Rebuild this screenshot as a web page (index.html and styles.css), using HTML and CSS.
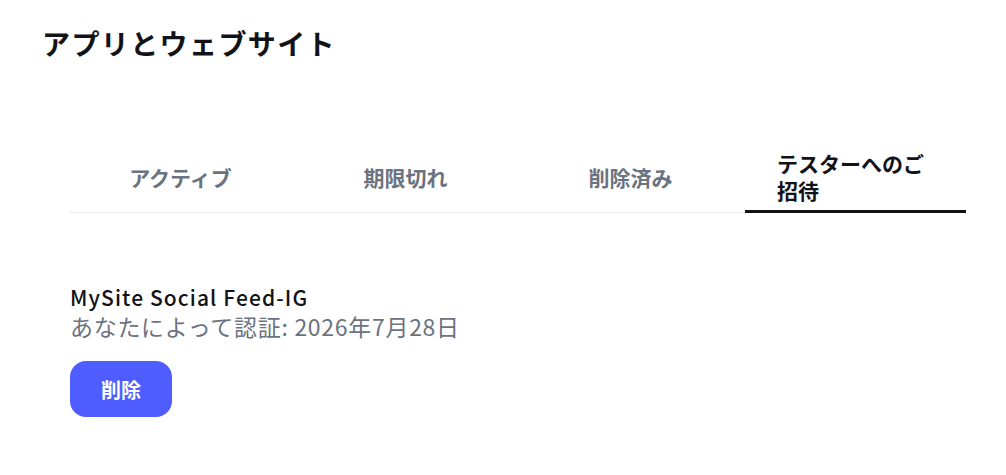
FILE: index.html
```html
<!DOCTYPE html>
<html lang="ja">
<head>
<meta charset="utf-8">
<title>アプリとウェブサイト</title>
<link rel="stylesheet" href="styles.css">
</head>
<body>
<main class="page">
  <h1 class="title">アプリとウェブサイト</h1>
  <div class="tabs">
    <div class="tab"><span>アクティブ</span></div>
    <div class="tab"><span>期限切れ</span></div>
    <div class="tab"><span>削除済み</span></div>
    <div class="tab active"><span>テスターへのご招待</span></div>
  </div>
  <section class="app">
    <div class="app-name">MySite Social Feed-IG</div>
    <div class="app-meta">あなたによって認証: 2026年7月28日</div>
    <button class="btn-delete" type="button">削除</button>
  </section>
</main>
</body>
</html>
```
FILE: styles.css
```css
* { box-sizing: border-box; }
html, body { margin: 0; padding: 0; background: #fff; }
body {
  font-family: "Noto Sans CJK JP", "Noto Sans", sans-serif;
  color: #111318;
}
.page {
  padding: 25px 0 0 0;
}
.title {
  margin: 0 0 0 42px;
  font-size: 28px;
  line-height: 36px;
  font-weight: 700;
  letter-spacing: 1.4px;
  color: #111318;
}
.tabs {
  margin: 73px 0 0 70px;
  width: 896px;
  display: flex;
  gap: 4px;
  border-bottom: 1px solid #e5e7eb;
}
.tab {
  flex: 1 1 0;
  display: flex;
  align-items: center;
  justify-content: center;
  padding: 16px 32px 8px;
  font-size: 21px;
  line-height: 27px;
  font-weight: 700;
  color: #6b7280;
}
.tab.active {
  color: #111318;
  border-bottom: 3px solid #111318;
  margin-bottom: -1px;
  padding-bottom: 6px;
}
.app {
  margin: 70px 0 0 70px;
}
.app-name {
  font-size: 21px;
  line-height: 28px;
  font-weight: 500;
  letter-spacing: 1.1px;
  color: #111318;
}
.app-meta {
  font-size: 23px;
  line-height: 31px;
  letter-spacing: 0.7px;
  color: #6b7280;
}
.btn-delete {
  margin-top: 19px;
  width: 102px;
  height: 56px;
  border: 0;
  border-radius: 16px;
  background: #4f5cff;
  color: #fff;
  font-family: inherit;
  font-size: 20px;
  font-weight: 700;
  cursor: pointer;
}
```
